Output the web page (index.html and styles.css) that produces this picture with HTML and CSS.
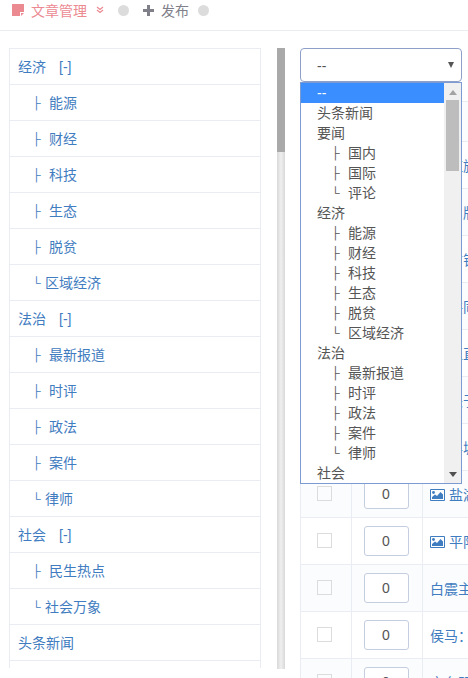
FILE: index.html
```html
<!DOCTYPE html>
<html lang="zh-CN">
<head>
  <meta charset="UTF-8">
  <title>文章管理</title>
  <link rel="stylesheet" href="styles.css">
</head>
<body>
  <!-- top bar -->
  <div class="top-bar">
    <span class="tab tab-active">
      <svg width="12" height="12" viewBox="0 0 12 12"><path d="M0 0H12V8H8V12H0Z" fill="#ec8a92"/><path d="M9 9H12L9 12Z" fill="#ec8a92"/></svg>
      文章管理
      <svg class="tab-arrow" width="8" height="8" viewBox="0 0 8 8"><path d="M1 1L4 3.500L7 1M1 4L4 6.500L7 4" fill="none" stroke="#ec8a92" stroke-width="1.200"/></svg>
    </span>
    <span class="dot"></span>
    <span class="tab">
      <svg width="11" height="11" viewBox="0 0 11 11"><path d="M4 0H7V4H11V7H7V11H4V7H0V4H4Z" fill="#80808a"/></svg>
      发布
    </span>
    <span class="dot dot-last"></span>
  </div>

  <div class="main">
    <!-- category tree -->
    <ul class="tree">
      <li>经济<span class="toggle">[-]</span></li>
      <li class="sub"><span class="branch">├</span>能源</li>
      <li class="sub"><span class="branch">├</span>财经</li>
      <li class="sub"><span class="branch">├</span>科技</li>
      <li class="sub"><span class="branch">├</span>生态</li>
      <li class="sub"><span class="branch">├</span>脱贫</li>
      <li class="sub"><span class="branch end">└</span>区域经济</li>
      <li>法治<span class="toggle">[-]</span></li>
      <li class="sub"><span class="branch">├</span>最新报道</li>
      <li class="sub"><span class="branch">├</span>时评</li>
      <li class="sub"><span class="branch">├</span>政法</li>
      <li class="sub"><span class="branch">├</span>案件</li>
      <li class="sub"><span class="branch end">└</span>律师</li>
      <li>社会<span class="toggle">[-]</span></li>
      <li class="sub"><span class="branch">├</span>民生热点</li>
      <li class="sub"><span class="branch end">└</span>社会万象</li>
      <li>头条新闻</li>
      <li></li>
    </ul>

    <div class="page-scroll"><div class="page-thumb"></div></div>

    <!-- article list -->
    <div class="content">
      <div class="select-box">
        <span>--</span>
        <span class="select-arrow"></span>
      </div>

      <div class="dropdown">
        <div class="options">
          <div class="option selected">--</div>
          <div class="option">头条新闻</div>
          <div class="option">要闻</div>
          <div class="option child"><span class="branch">├</span>国内</div>
          <div class="option child"><span class="branch">├</span>国际</div>
          <div class="option child"><span class="branch">└</span>评论</div>
          <div class="option">经济</div>
          <div class="option child"><span class="branch">├</span>能源</div>
          <div class="option child"><span class="branch">├</span>财经</div>
          <div class="option child"><span class="branch">├</span>科技</div>
          <div class="option child"><span class="branch">├</span>生态</div>
          <div class="option child"><span class="branch">├</span>脱贫</div>
          <div class="option child"><span class="branch">└</span>区域经济</div>
          <div class="option">法治</div>
          <div class="option child"><span class="branch">├</span>最新报道</div>
          <div class="option child"><span class="branch">├</span>时评</div>
          <div class="option child"><span class="branch">├</span>政法</div>
          <div class="option child"><span class="branch">├</span>案件</div>
          <div class="option child"><span class="branch">└</span>律师</div>
          <div class="option">社会</div>
        </div>
        <div class="drop-scroll">
          <span class="scroll-up"></span>
          <div class="drop-thumb"></div>
          <span class="scroll-down"></span>
        </div>
      </div>

      <table class="list">
        <tr class="head"><td class="c-check"></td><td class="c-num"></td><td class="c-title"></td></tr>
        <tr><td class="c-check"><span class="check"></span></td><td class="c-num"><span class="num">0</span></td><td class="c-title"><svg class="pic" width="15" height="12" viewBox="0 0 15 12"><use href="#pic"/></svg>红旗</td></tr>
        <tr><td class="c-check"><span class="check"></span></td><td class="c-num"><span class="num">0</span></td><td class="c-title"><svg class="pic" width="15" height="12" viewBox="0 0 15 12"><use href="#pic"/></svg>出版</td></tr>
        <tr><td class="c-check"><span class="check"></span></td><td class="c-num"><span class="num">0</span></td><td class="c-title"><svg class="pic" width="15" height="12" viewBox="0 0 15 12"><use href="#pic"/></svg>方针</td></tr>
        <tr><td class="c-check"><span class="check"></span></td><td class="c-num"><span class="num">0</span></td><td class="c-title"><svg class="pic" width="15" height="12" viewBox="0 0 15 12"><use href="#pic"/></svg>共同</td></tr>
        <tr><td class="c-check"><span class="check"></span></td><td class="c-num"><span class="num">0</span></td><td class="c-title"><svg class="pic" width="15" height="12" viewBox="0 0 15 12"><use href="#pic"/></svg>正直</td></tr>
        <tr><td class="c-check"><span class="check"></span></td><td class="c-num"><span class="num">0</span></td><td class="c-title"><svg class="pic" width="15" height="12" viewBox="0 0 15 12"><use href="#pic"/></svg>关于</td></tr>
        <tr><td class="c-check"><span class="check"></span></td><td class="c-num"><span class="num">0</span></td><td class="c-title"><svg class="pic" width="15" height="12" viewBox="0 0 15 12"><use href="#pic"/></svg>县城</td></tr>
        <tr><td class="c-check"><span class="check"></span></td><td class="c-num"><span class="num">0</span></td><td class="c-title"><svg class="pic" width="15" height="12" viewBox="0 0 15 12"><use href="#pic"/></svg>盐湖</td></tr>
        <tr><td class="c-check"><span class="check"></span></td><td class="c-num"><span class="num">0</span></td><td class="c-title"><svg class="pic" width="15" height="12" viewBox="0 0 15 12"><use href="#pic"/></svg>平阳</td></tr>
        <tr><td class="c-check"><span class="check"></span></td><td class="c-num"><span class="num">0</span></td><td class="c-title">白震主</td></tr>
        <tr><td class="c-check"><span class="check"></span></td><td class="c-num"><span class="num">0</span></td><td class="c-title">侯马：</td></tr>
        <tr><td class="c-check"><span class="check"></span></td><td class="c-num"><span class="num">0</span></td><td class="c-title">京台明</td></tr>
      </table>
    </div>
  </div>

  <svg width="0" height="0" class="defs">
    <symbol id="pic" viewBox="0 0 15 12">
      <path d="M.5.5H14.5V11.500H.5Z" fill="none" stroke="#3f7cc0"/>
      <circle cx="3.500" cy="3.500" r="1.400" fill="#3f7cc0"/>
      <path d="M2 10V8L5 5.500L7 7L10.500 3L13 5.500V10Z" fill="#3f7cc0"/>
    </symbol>
  </svg>
</body>
</html>
```

FILE: styles.css
```css
body {
  margin: 0;
  height: 678px;
  overflow: hidden;
  background-color: white;
  color: #3f7cc0;
  font-family: "Liberation Sans", "Noto Sans CJK SC", sans-serif;
  font-size: 14px;
}

.defs {
  position: absolute;
}

.top-bar {
  display: flex;
  align-items: center;
  gap: 14px;
  height: 20px;
  padding-left: 12px;
  padding-bottom: 10px;
  border-bottom: 1px solid #e9edf3;
  color: #80808a;
}

.tab {
  display: flex;
  align-items: center;
  gap: 7px;
}

.tab-active {
  color: #ec8a92;
}

.tab-arrow {
  margin-left: 2px;
}

.dot {
  width: 11px;
  height: 11px;
  border-radius: 50%;
  background-color: #dcdcdc;
}

.dot-last {
  margin-left: -5px;
}

.main {
  display: flex;
  align-items: flex-start;
  height: 647px;
  padding: 17px 0 0 9px;
  box-sizing: border-box;
  overflow: hidden;
}

.tree {
  flex: none;
  width: 252px;
  height: 620px;
  margin: 0;
  padding: 0;
  overflow: hidden;
  list-style: none;
  border: 1px solid #e9edf3;
  border-bottom: none;
  box-sizing: border-box;
}

.tree li {
  height: 35px;
  padding-left: 8px;
  line-height: 37px;
  border-bottom: 1px solid #e9edf3;
}

.tree .sub {
  padding-left: 22px;
}

.toggle {
  margin-left: 13px;
}

.branch {
  display: inline-block;
  width: 17px;
  font-size: 12px;
  vertical-align: 1px;
}

.branch.end {
  width: 13px;
}

.page-scroll {
  flex: none;
  width: 8px;
  height: 621px;
  margin-left: 16px;
  background: linear-gradient(to right, #d8d8d8, #efefef, #d8d8d8);
}

.page-thumb {
  height: 104px;
  background-color: #a9a9a9;
}

.content {
  position: relative;
  flex: none;
  width: 168px;
  margin-left: 15px;
  overflow: hidden;
}

.select-box {
  display: flex;
  justify-content: space-between;
  align-items: center;
  width: 162px;
  height: 34px;
  padding: 2px 7px 0 16px;
  border: 1px solid #8ea0c8;
  border-radius: 4px;
  box-sizing: border-box;
  color: #555;
}

.select-arrow {
  margin-bottom: 2px;
  border-top: 6px solid #555;
  border-left: 3px solid transparent;
  border-right: 3px solid transparent;
}

.dropdown {
  position: absolute;
  top: 34px;
  left: 0;
  z-index: 2;
  display: flex;
  width: 160px;
  height: 400px;
  border: 1px solid #7c9bd2;
  background-color: white;
  color: #555;
}

.options {
  flex: 1;
  overflow: hidden;
}

.option {
  height: 20px;
  padding-left: 16px;
  line-height: 21px;
}

.option.child {
  padding-left: 30px;
}

.option.selected {
  background-color: #3a8eff;
  color: white;
}

.drop-scroll {
  display: flex;
  flex-direction: column;
  align-items: center;
  flex: none;
  width: 17px;
  background-color: #f0f0f0;
}

.scroll-up {
  margin: 7px 0 5px;
  border-bottom: 5px solid #a3a3a3;
  border-left: 4px solid transparent;
  border-right: 4px solid transparent;
}

.drop-thumb {
  width: 13px;
  height: 71px;
  background-color: #bdbdbd;
}

.scroll-down {
  margin-top: auto;
  margin-bottom: 6px;
  border-top: 5px solid #505050;
  border-left: 4px solid transparent;
  border-right: 4px solid transparent;
}

.list {
  width: 360px;
  margin-top: 19px;
  border-collapse: collapse;
  table-layout: fixed;
}

.list td {
  height: 47px;
  padding: 0;
  border: 1px solid #e9edf3;
  box-sizing: border-box;
}

.list .head td {
  height: 40px;
}

.list tr:nth-child(odd) td {
  background-color: #fbfcfe;
}

.c-check {
  width: 51px;
  text-align: center;
}

.c-num {
  width: 71px;
  text-align: center;
}

.list .c-title {
  padding-left: 7px;
  white-space: nowrap;
}

.check {
  display: inline-block;
  width: 15px;
  height: 15px;
  margin-right: 4px;
  margin-bottom: 2px;
  vertical-align: middle;
  border: 1px solid #dcdcdc;
  box-sizing: border-box;
}

.num {
  display: inline-block;
  width: 45px;
  height: 30px;
  margin-right: 2px;
  line-height: 28px;
  vertical-align: middle;
  border: 1px solid #c5cde0;
  border-radius: 3px;
  box-sizing: border-box;
  background-color: white;
  color: #555;
}

.pic {
  margin-right: 4px;
  vertical-align: -1px;
}
```
